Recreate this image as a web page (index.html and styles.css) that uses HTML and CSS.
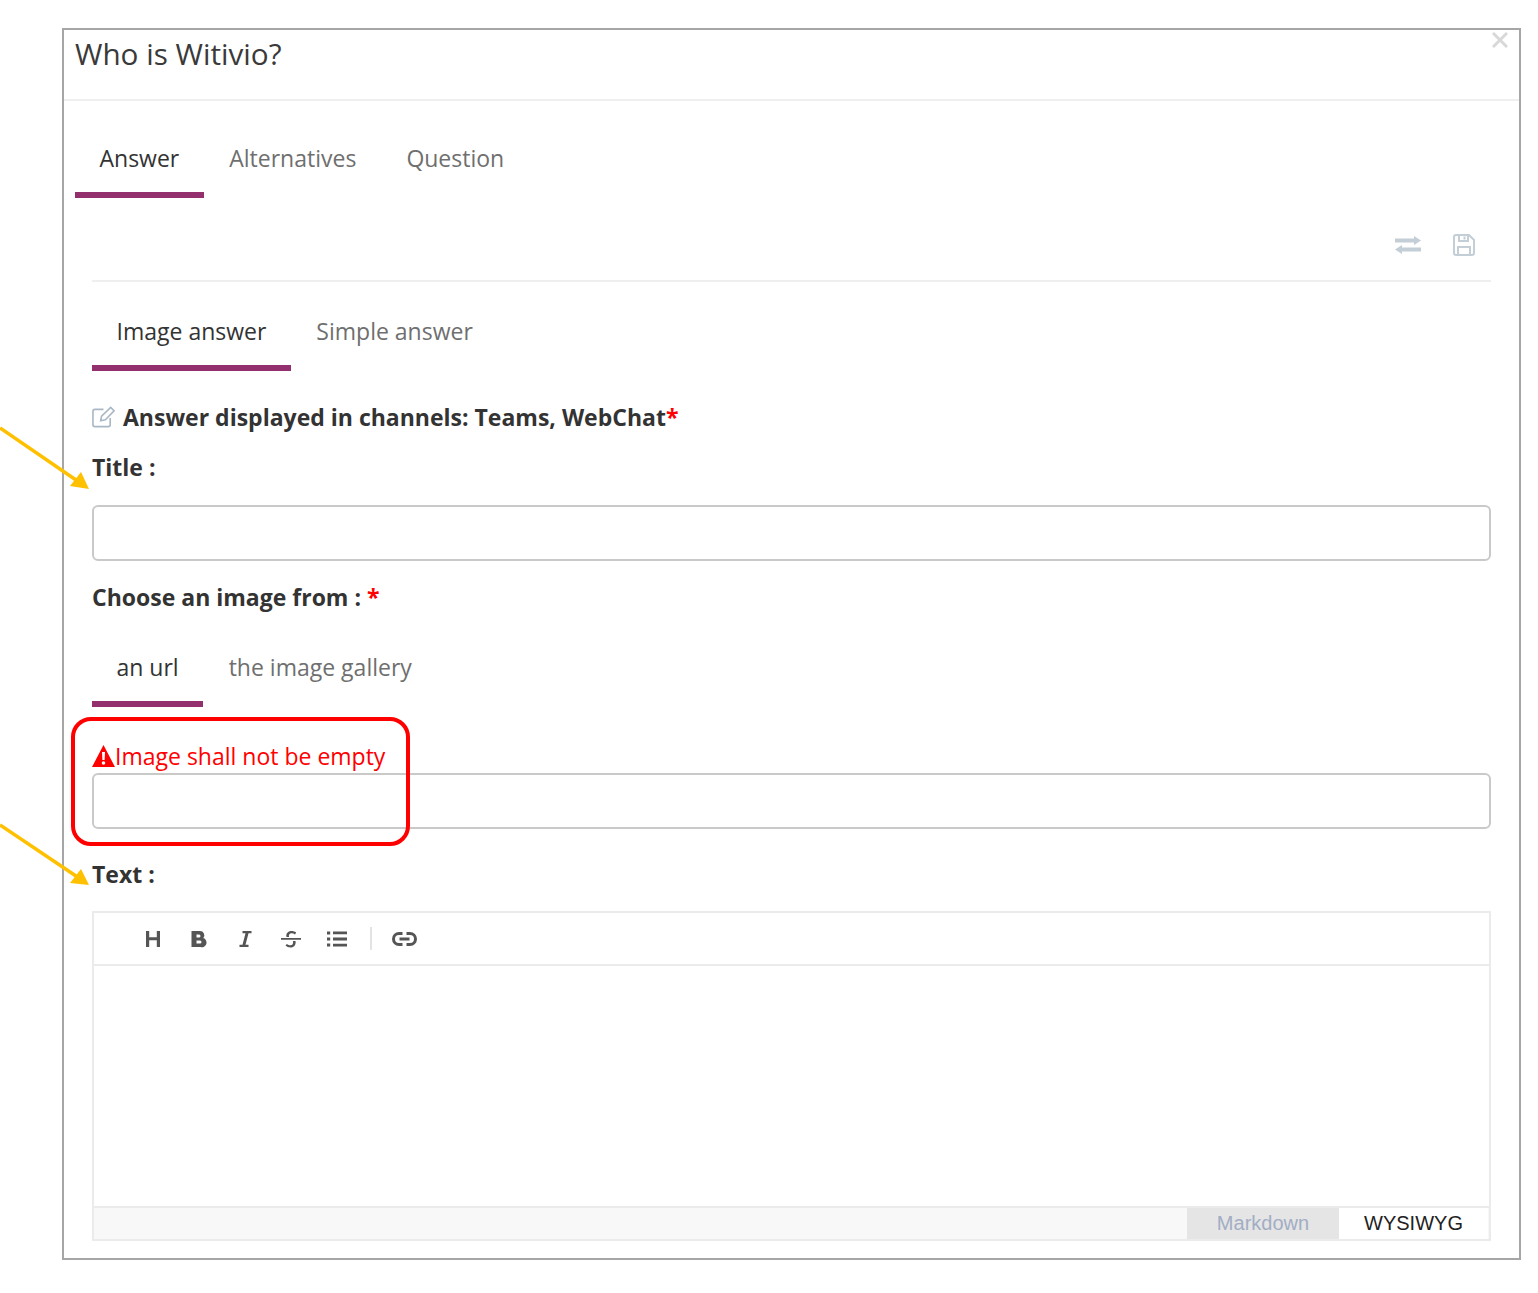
FILE: index.html
```html
<!DOCTYPE html>
<html lang="en">
<head>
<meta charset="utf-8">
<title>Who is Witivio?</title>
<link rel="stylesheet" href="styles.css">
</head>
<body>
<main class="modal">
  <header class="modal-head">
    <h1 class="modal-title">Who is Witivio?</h1>
    <svg class="close" viewBox="0 0 16 16"><path d="M1 1L15 15M15 1L1 15"/></svg>
  </header>
  <nav class="tabs tabs-main">
    <span class="tab active">Answer</span>
    <span class="tab">Alternatives</span>
    <span class="tab">Question</span>
  </nav>
  <section class="body">
    <div class="actions">
      <svg class="act-swap" viewBox="0 0 26 18"><path d="M0 2.500h19V0l7 4.500-7 4.500V6.500H0zM26 11.500H7V9l-7 4.500L7 18v-2.500h19z"/></svg>
      <svg class="act-save" viewBox="0 0 22 22"><path d="M1 3a2 2 0 0 1 2-2h13l5 5v13a2 2 0 0 1-2 2H3a2 2 0 0 1-2-2zM6 1v6h9V1M11.500 2.500v3M5 21v-8h12v8"/></svg>
    </div>
    <nav class="tabs tabs-sub">
      <span class="tab active">Image answer</span>
      <span class="tab">Simple answer</span>
    </nav>
    <div class="heading">
      <svg class="edit" viewBox="0 0 24 24"><path d="M19 13v7a2 2 0 0 1-2 2H3a2 2 0 0 1-2-2V6a2 2 0 0 1 2-2h9M10 11l-1 5 5-1L23 5.500 19.500 2z"/></svg>
      <span>Answer displayed in channels: Teams, WebChat<em class="req">*</em></span>
    </div>
    <label class="field-label label-title">Title :</label>
    <div class="input"></div>
    <label class="field-label label-choose">Choose an image from : <em class="req">*</em></label>
    <nav class="tabs tabs-img">
      <span class="tab active">an url</span>
      <span class="tab">the image gallery</span>
    </nav>
    <div class="error">
      <svg class="warn" viewBox="0 0 23 22"><path fill-rule="evenodd" d="M11.500 0L23 22H0zM10 7l.4 8h2.200l.4-8zM11.500 16.200a1.800 1.800 0 1 0 0 3.600 1.800 1.800 0 0 0 0-3.600z"/></svg>
      <span>Image shall not be empty</span>
    </div>
    <div class="input"></div>
    <label class="field-label label-text">Text :</label>
    <div class="editor">
      <div class="toolbar">
        <svg class="tool" viewBox="0 0 20 20"><path d="M3 2h3.200v6.300h7.600V2H17v16h-3.200v-6.800H6.200V18H3z"/></svg>
        <svg class="tool" viewBox="0 0 20 20"><path fill-rule="evenodd" d="M2.500 2h8.500a4.300 4.300 0 0 1 3.300 7.100A4.500 4.500 0 0 1 11.500 18h-9zM7.500 5.500v3H10a1.500 1.500 0 0 0 0-3zM7.500 11.500v3H11a1.500 1.500 0 0 0 0-3z"/></svg>
        <svg class="tool" viewBox="0 0 20 20"><path d="M7.500 2h9v2.200h-3l-3 11.600h3V18h-9v-2.200h3l3-11.600h-3z"/></svg>
        <svg class="tool" viewBox="0 0 20 20"><path d="M0 9h20v1.800H0zM5.500 8c-.8-3.500 1.500-6 5-6 1.800 0 3.300.5 4.700 1.500L14 5.500c-1-.7-2.200-1.200-3.500-1.200-1.800 0-3 1.200-2.500 3.700zM14.500 12c.8 3.800-1.500 6.500-5 6.500-2 0-3.700-.7-5-1.900L5.900 15c1 .8 2.300 1.300 3.600 1.300 1.900 0 3-1.500 2.500-4.300z"/></svg>
        <svg class="tool" viewBox="0 0 20 20"><path d="M6 2.500h14v2.800H6zM6 8.600h14v2.800H6zM6 14.700h14v2.800H6zM0 2.400h3.200v3H0zM0 8.500h3.200v3H0zM0 14.600h3.200v3H0z"/></svg>
        <i class="tool-sep"></i>
        <svg class="tool tool-link" viewBox="0 0 26 16"><path d="M11 2.500H7.500a5.500 5.500 0 0 0 0 11H11M15 2.500h3.500a5.500 5.500 0 0 1 0 11H15M8 8h10"/></svg>
      </div>
      <div class="editor-area"></div>
      <div class="editor-foot">
        <span class="mode mode-md">Markdown</span>
        <span class="mode mode-wy">WYSIWYG</span>
      </div>
    </div>
  </section>
</main>
<div class="callout"></div>
<svg class="arrows" viewBox="0 0 100 900">
  <path class="arrow-line" d="M0 428L76 480"/>
  <path class="arrow-head" d="M89 489L70 486L81 472z"/>
  <path class="arrow-line" d="M0 825L76 876"/>
  <path class="arrow-head" d="M89 885L70 883L81 869z"/>
</svg>
</body>
</html>
```
FILE: styles.css
```css
* { box-sizing: border-box; }
html, body { margin: 0; background: #fff; }
body {
  position: relative;
  height: 1293px;
  padding: 28px 17px 0 62px;
  font-family: "Open Sans", sans-serif;
  color: #333;
  overflow: hidden;
}
.modal {
  height: 1232px;
  border: 2px solid #a6a6a6;
  background: #fff;
}
.modal-head {
  position: relative;
  height: 71px;
  padding: 4px 11px 0;
  border-bottom: 2px solid #efefef;
}
.modal-title {
  margin: 0;
  font-size: 29.700px;
  line-height: 40px;
  font-weight: 400;
  color: #3a3a3a;
}
.close {
  position: absolute;
  right: 11px;
  top: 2px;
  width: 16px;
  height: 16px;
  fill: none;
  stroke: #d8d8d8;
  stroke-width: 3;
}
.tabs { display: flex; gap: 1px; }
.tab {
  padding: 0 24.500px;
  color: #6f6f6f;
  font-size: 23px;
}
.tab.active {
  color: #333;
  border-bottom: 6px solid #932f6d;
}
.tabs-main {
  height: 97px;
  padding: 35px 0 0 11px;
}
.tabs-main .tab { height: 62px; line-height: 44px; }
.body { padding: 0 28px 0 28px; }
.actions {
  display: flex;
  justify-content: flex-end;
  align-items: center;
  gap: 32px;
  height: 84px;
  padding: 12px 16px 0 0;
  border-bottom: 2px solid #efefef;
}
.act-swap { width: 26px; height: 18px; fill: #c3ced6; }
.act-save {
  width: 22px;
  height: 22px;
  fill: none;
  stroke: #c3ced6;
  stroke-width: 2;
}
.tabs-sub { height: 89px; padding-top: 27px; }
.tabs-sub .tab { height: 62px; line-height: 44px; }
.heading {
  display: flex;
  align-items: center;
  gap: 8px;
  height: 36px;
  margin-top: 28px;
  font-size: 23px;
  font-weight: 700;
}
.edit {
  width: 23px;
  height: 24px;
  margin-top: -1px;
  fill: none;
  stroke: #a9b8c6;
  stroke-width: 1.700;
}
.req { font-style: normal; color: #f00; }
.field-label {
  display: block;
  font-size: 23px;
  font-weight: 700;
  line-height: 36px;
}
.label-title { margin: 14px 0 20px; }
.input {
  height: 56px;
  border: 2px solid #c9c9c9;
  border-radius: 6px;
  background: #fff;
}
.label-choose { margin-top: 18px; }
.tabs-img { height: 92px; padding-top: 30px; }
.tabs-img .tab { height: 62px; line-height: 44px; }
.error {
  display: flex;
  align-items: center;
  height: 35px;
  margin-top: 31px;
  color: #f00;
  font-size: 23px;
}
.warn { width: 23px; height: 22px; fill: #f00; }
.label-text { margin: 27px 0 19px; }
.editor {
  display: flex;
  flex-direction: column;
  height: 330px;
  border: 2px solid #ebebeb;
}
.toolbar {
  display: flex;
  align-items: center;
  gap: 26px;
  height: 53px;
  padding-left: 49px;
  border-bottom: 2px solid #ebebeb;
}
.tool { width: 20px; height: 20px; fill: #555; }
.tool-sep { width: 2px; height: 23px; margin: 0 -4px 0 -3px; background: #e3e3e3; }
.tool-link {
  width: 27px;
  height: 16px;
  margin-left: -3px;
  fill: none;
  stroke: #555;
  stroke-width: 3;
}
.editor-area { flex: 1; }
.editor-foot {
  display: flex;
  justify-content: flex-end;
  height: 33px;
  background: #f8f8f8;
  border-top: 2px solid #ebebeb;
  font-family: "Liberation Sans", Arial, sans-serif;
  font-size: 20px;
  line-height: 31px;
  text-align: center;
}
.mode-md { width: 152px; color: #a2adc4; background: #e5e5e5; }
.mode-wy { width: 149px; margin-right: 1px; color: #222; background: #fff; }
.callout {
  position: absolute;
  left: 71px;
  top: 717px;
  width: 339px;
  height: 129px;
  border: 4px solid #f00;
  border-radius: 20px;
}
.arrows {
  position: absolute;
  left: 0;
  top: 0;
  width: 100px;
  height: 900px;
}
.arrow-line { fill: none; stroke: #ffc000; stroke-width: 3.500; }
.arrow-head { fill: #ffc000; }
```
